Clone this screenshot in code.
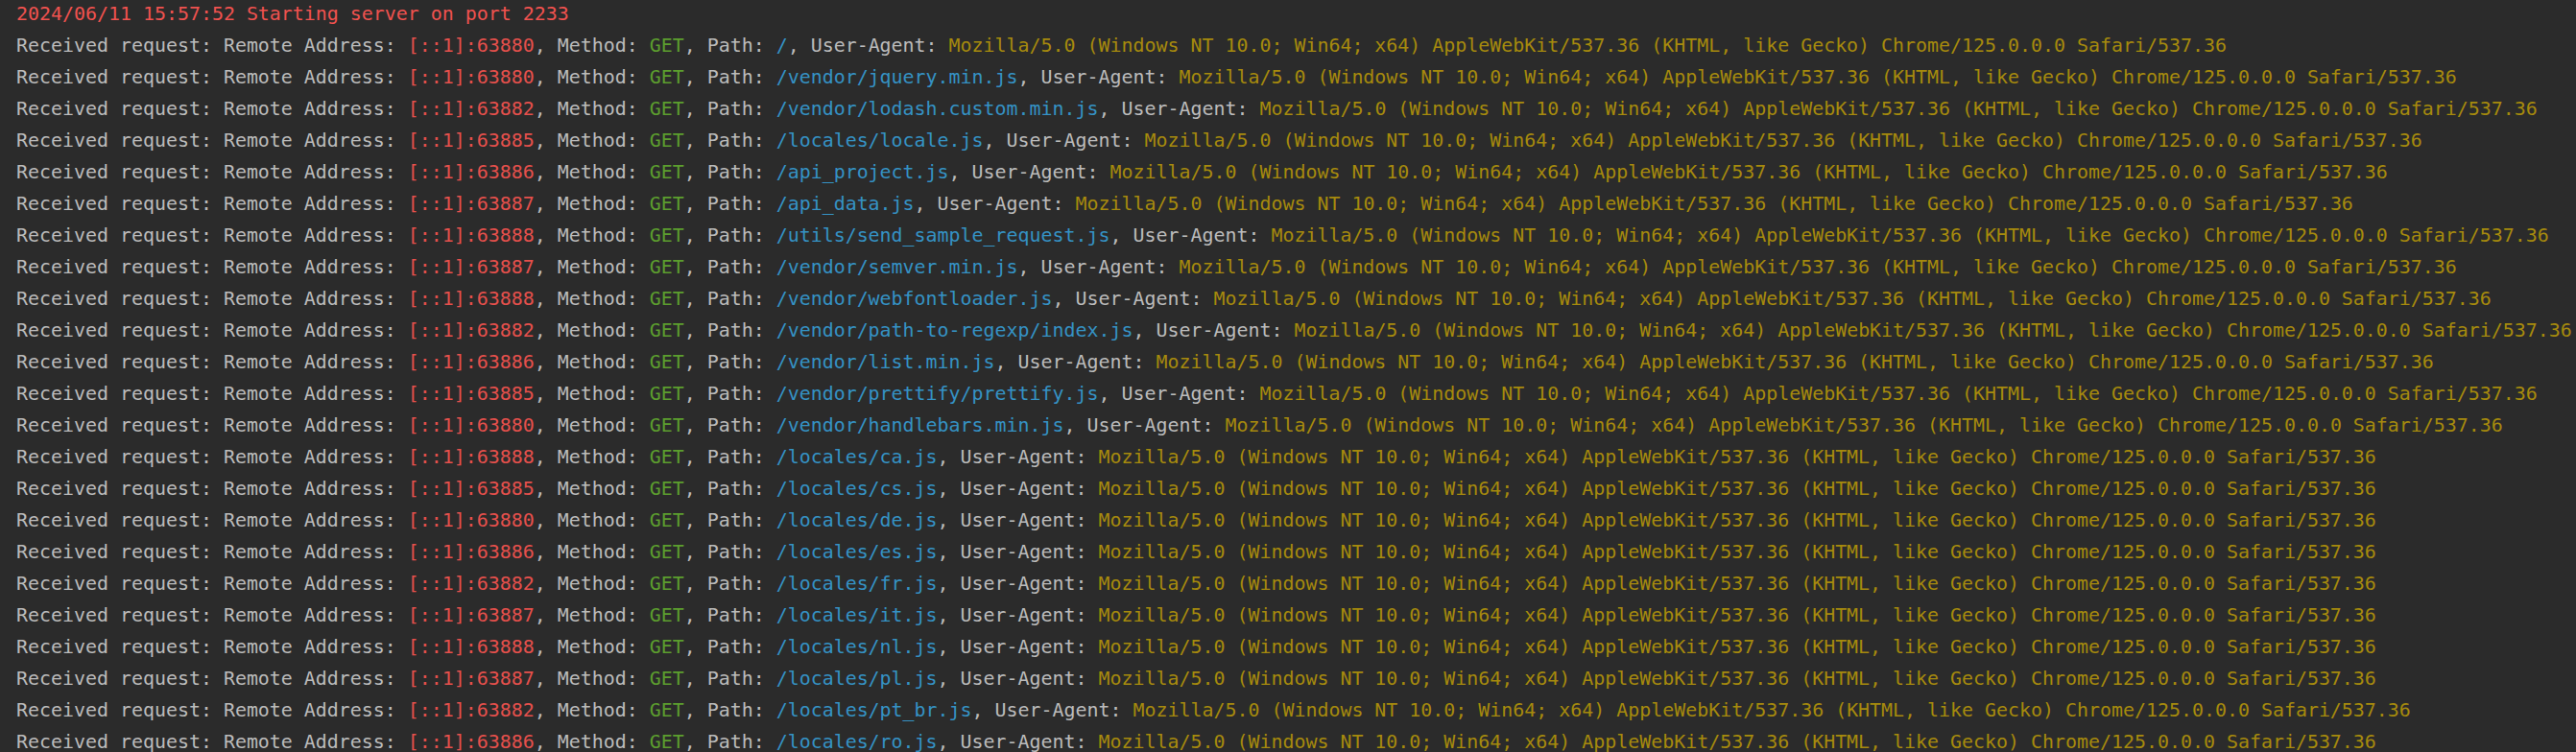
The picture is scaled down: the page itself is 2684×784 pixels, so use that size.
const rows: [string, string][] = [
  ["63880", "/"],
  ["63880", "/vendor/jquery.min.js"],
  ["63882", "/vendor/lodash.custom.min.js"],
  ["63885", "/locales/locale.js"],
  ["63886", "/api_project.js"],
  ["63887", "/api_data.js"],
  ["63888", "/utils/send_sample_request.js"],
  ["63887", "/vendor/semver.min.js"],
  ["63888", "/vendor/webfontloader.js"],
  ["63882", "/vendor/path-to-regexp/index.js"],
  ["63886", "/vendor/list.min.js"],
  ["63885", "/vendor/prettify/prettify.js"],
  ["63880", "/vendor/handlebars.min.js"],
  ["63888", "/locales/ca.js"],
  ["63885", "/locales/cs.js"],
  ["63880", "/locales/de.js"],
  ["63886", "/locales/es.js"],
  ["63882", "/locales/fr.js"],
  ["63887", "/locales/it.js"],
  ["63888", "/locales/nl.js"],
  ["63887", "/locales/pl.js"],
  ["63882", "/locales/pt_br.js"],
  ["63886", "/locales/ro.js"],
];

const UA =
  "Mozilla/5.0 (Windows NT 10.0; Win64; x64) AppleWebKit/537.36 (KHTML, like Gecko) Chrome/125.0.0.0 Safari/537.36";

export default function App() {
  return (
    <div className="h-[784px] w-full overflow-hidden bg-[#2b2b2b]">
      <div className="-mt-[2px] pl-[17px] font-['DejaVu_Sans_Mono',monospace] text-[19.93px] leading-[33px] whitespace-pre text-[#bbbbbb]">
        <div className="text-[#f0524f]">2024/06/11 15:57:52 Starting server on port 2233</div>
        {rows.map(([port, path], i) => (
          <div key={i}>
            Received request: Remote Address:{" "}
            <span className="text-[#e5504c]">[::1]:{port}</span>, Method:{" "}
            <span className="text-[#5c9e2e]">GET</span>, Path:{" "}
            <span className="text-[#3592c4]">{path}</span>, User-Agent:{" "}
            <span className="text-[#a68a0d]">{UA}</span>
          </div>
        ))}
      </div>
    </div>
  );
}
